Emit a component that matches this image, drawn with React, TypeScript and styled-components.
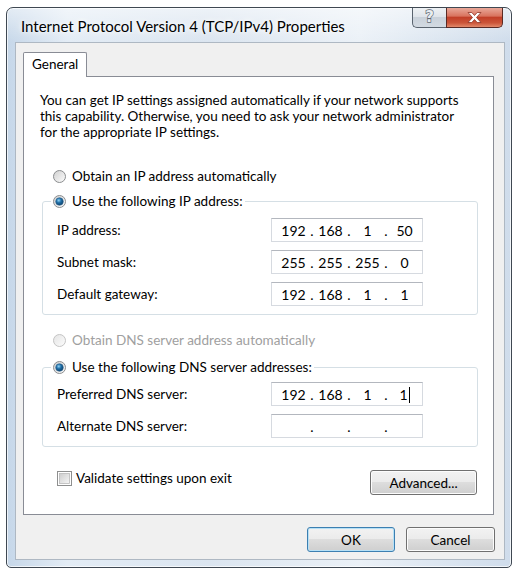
import React from 'react';
import styled, {createGlobalStyle} from 'styled-components';

const GlobalStyle = createGlobalStyle`
  html, body {
    margin: 0;
    padding: 0;
    background: #fff;
  }
  body {
    font-family: "Segoe UI", Lato, "Noto Sans", sans-serif;
    font-size: 13.5px;
    color: #000;
  }
`

const Window = styled.div`
  box-sizing: border-box;
  width: 506px;
  height: 561px;
  margin: 7px 0 0 6px;
  padding: 0 6px 7px 8px;
  display: flex;
  flex-direction: column;
  border: 1px solid #3f4852;
  border-radius: 7px 7px 5px 5px;
  box-shadow: inset 0 0 0 1px rgba(255, 255, 255, 0.7);
  background: linear-gradient(180deg, rgba(255, 255, 255, 0.5) 0px, rgba(255, 255, 255, 0) 34px),
    linear-gradient(90deg, #c6d7e9 0%, #e3ecf5 12%, #dbe5f0 40%, #ebf1f7 70%, #cfdceb 100%);
`

const TitleBar = styled.div`
  height: 34px;
  display: flex;
  justify-content: space-between;
  align-items: flex-start;
`

const Title = styled.div`
  margin-top: 9px;
  padding-left: 6px;
  font-size: 15px;
  line-height: 18px;
  text-shadow: 0 0 8px #fff, 0 0 4px #fff;
  white-space: nowrap;
`

const CaptionButtons = styled.div`
  display: flex;
  margin-right: 2px;
`

const HelpButton = styled.div`
  box-sizing: border-box;
  width: 34px;
  height: 20px;
  display: flex;
  align-items: center;
  justify-content: center;
  border: 1px solid #59636e;
  border-top: none;
  border-right: none;
  border-radius: 0 0 0 5px;
  background: linear-gradient(180deg, #eef1f4 0%, #dfe4ea 45%, #c9d1da 50%, #d3dae2 100%);
  font-family: "DejaVu Sans", sans-serif;
  font-weight: bold;
  font-size: 15px;
  line-height: 1;
  color: #e9edf1;
  -webkit-text-stroke: 1.3px #5f6873;
  paint-order: stroke fill;
`

const CloseButton = styled.div`
  box-sizing: border-box;
  width: 57px;
  height: 20px;
  display: flex;
  align-items: center;
  justify-content: center;
  border: 1px solid #5a2a24;
  border-top: none;
  border-radius: 0 0 5px 0;
  background: linear-gradient(180deg, #e9a899 0%, #d9745f 42%, #c23f28 50%, #cb5539 78%, #e3896a 100%);
`

const Client = styled.div`
  flex: 1;
  display: flex;
  flex-direction: column;
  border: 1px solid #aeb8c3;
  background: #f0f0f0;
  padding: 9px 10px 0 7px;
`

const TabStrip = styled.div`
  display: flex;
`

const Tab = styled.div`
  position: relative;
  z-index: 1;
  box-sizing: border-box;
  width: 64px;
  height: 25px;
  margin-bottom: -1px;
  padding-left: 8px;
  line-height: 23px;
  background: #fff;
  border: 1px solid #898c95;
  border-bottom: none;
  border-radius: 2px 2px 0 0;
`

const Panel = styled.div`
  box-sizing: border-box;
  height: 439px;
  display: flex;
  flex-direction: column;
  padding: 15px 15px 0 18px;
  background: #fff;
  border: 1px solid #898c95;
`

const Intro = styled.p`
  margin: 0 0 0 -2px;
  line-height: 16px;
  white-space: nowrap;
`

const RadioRow = styled.label<{ $top: number; $disabled?: boolean }>`
  display: flex;
  align-items: center;
  gap: 6px;
  height: 18px;
  margin: ${p => p.$top}px 0 0 11px;
  color: ${p => (p.$disabled ? '#a0a0a0' : '#000')};
`

const LegendRadio = styled(RadioRow)`
  margin-left: 0;
`

const Group = styled.fieldset<{ $top: number }>`
  margin: ${p => p.$top}px 0 0 0;
  padding: 0;
  min-width: 0;
  border: 1px solid #d5dfe5;
  border-radius: 3px;
`

const Legend = styled.legend`
  margin-left: 8px;
  padding: 0 2px;
`

const Rows = styled.div<{ $top: number }>`
  display: flex;
  flex-direction: column;
  gap: 8px;
  padding: ${p => p.$top}px 0 8px 14px;
`

const FieldRow = styled.div`
  display: grid;
  grid-template-columns: 214px 152px;
  align-items: center;
`

const IpBox = styled.div`
  box-sizing: border-box;
  height: 24px;
  display: flex;
  align-items: center;
  padding-left: 6px;
  border: 1px solid #d6dae0;
  border-top-color: #b3b7be;
  font-size: 14px;
  background: #fff;
`

const Octet = styled.span`
  width: 31px;
  text-align: center;
  white-space: nowrap;
`

const Dot = styled.span`
  width: 6px;
  text-align: center;
`

const Caret = styled.span`
  display: inline-block;
  width: 1px;
  height: 16px;
  margin-left: 1px;
  vertical-align: -3px;
  background: #000;
`

const BottomRow = styled.div`
  display: flex;
  justify-content: space-between;
  align-items: flex-start;
  margin-top: 23px;
  padding-right: 1px;
`

const CheckLabel = styled.label`
  display: flex;
  align-items: center;
  gap: 4px;
  height: 16px;
  margin: 0 0 0 15px;
`

const Button = styled.button<{ $width: number; $default?: boolean }>`
  box-sizing: border-box;
  width: ${p => p.$width}px;
  height: 25px;
  padding: 0;
  font-family: inherit;
  font-size: 13.5px;
  color: #000;
  border: 1px solid ${p => (p.$default ? '#3c7fb1' : '#707070')};
  border-radius: 3px;
  box-shadow: inset 0 0 0 1px ${p => (p.$default ? '#b6e0f6' : '#fcfcfc')};
  background: linear-gradient(180deg, #f2f2f2 0%, #ebebeb 49%, #dddddd 50%, #cfcfcf 100%);
`

const DialogButtons = styled.div`
  display: flex;
  justify-content: flex-end;
  gap: 11px;
  margin: 12px -1px 0 0;
`

function RadioIcon({checked, disabled}: { checked?: boolean; disabled?: boolean }) {
    const id = disabled ? 'rbg-off' : 'rbg-on';
    return (
        <svg width="13" height="13" viewBox="0 0 13 13">
            <defs>
                <linearGradient id={id} x1="0" y1="0" x2="1" y2="1">
                    <stop offset="0" stopColor={disabled ? '#e4e4e4' : '#cfcfcf'}/>
                    <stop offset="1" stopColor="#fdfdfd"/>
                </linearGradient>
                <radialGradient id="rdot" cx="0.4" cy="0.35" r="0.7">
                    <stop offset="0" stopColor="#8fd3f7"/>
                    <stop offset="0.45" stopColor="#1f6ea6"/>
                    <stop offset="1" stopColor="#0c3d66"/>
                </radialGradient>
            </defs>
            <circle cx="6.5" cy="6.5" r="6" fill={`url(#${id})`} stroke={disabled ? '#c4c4c4' : '#8b8d8f'}/>
            {checked && <circle cx="6.5" cy="6.5" r="3.8" fill="url(#rdot)" stroke="#2a5f8a" strokeWidth="0.6"/>}
        </svg>
    );
}

function CheckIcon() {
    return (
        <svg width="15" height="15" viewBox="0 0 15 15">
            <defs>
                <linearGradient id="cbg" x1="0" y1="0" x2="1" y2="1">
                    <stop offset="0" stopColor="#cdcdcd"/>
                    <stop offset="1" stopColor="#f6f6f6"/>
                </linearGradient>
            </defs>
            <rect x="0.5" y="0.5" width="14" height="14" fill="#fff" stroke="#8e8f8f"/>
            <rect x="2.5" y="2.5" width="10" height="10" fill="url(#cbg)" stroke="#b9b9b9" strokeWidth="0.8"/>
        </svg>
    );
}

function IpAddress({parts, caret}: { parts: string[]; caret?: boolean }) {
    return (
        <IpBox>
            {parts.map((part, i) => (
                <React.Fragment key={i}>
                    <Octet>{part}{caret && i === 3 && <Caret/>}</Octet>
                    {i < 3 && <Dot>.</Dot>}
                </React.Fragment>
            ))}
        </IpBox>
    );
}

const ipRows = [
    {label: 'IP address:', parts: ['192', '168', '1', '50']},
    {label: 'Subnet mask:', parts: ['255', '255', '255', '0']},
    {label: 'Default gateway:', parts: ['192', '168', '1', '1']},
];

export default function App() {
    return (
        <>
            <GlobalStyle/>
            <Window>
                <TitleBar>
                    <Title>Internet Protocol Version 4 (TCP/IPv4) Properties</Title>
                    <CaptionButtons>
                        <HelpButton>?</HelpButton>
                        <CloseButton>
                            <svg width="15" height="11" viewBox="0 0 15 11">
                                <path d="M1 0.5 H4.8 L7.5 3.5 L10.2 0.5 H14 L9.5 5.5 L14 10.5 H10.2 L7.5 7.5 L4.8 10.5 H1 L5.5 5.5 Z"
                                      fill="#fff" stroke="#8f3526" strokeWidth="0.8" strokeLinejoin="round"/>
                            </svg>
                        </CloseButton>
                    </CaptionButtons>
                </TitleBar>
                <Client>
                    <TabStrip>
                        <Tab>General</Tab>
                    </TabStrip>
                    <Panel>
                        <Intro>
                            You can get IP settings assigned automatically if your network supports<br/>
                            this capability. Otherwise, you need to ask your network administrator<br/>
                            for the appropriate IP settings.
                        </Intro>

                        <RadioRow $top={27}><RadioIcon/>Obtain an IP address automatically</RadioRow>
                        <Group $top={7}>
                            <Legend>
                                <LegendRadio $top={0}><RadioIcon checked/>Use the following IP address:</LegendRadio>
                            </Legend>
                            <Rows $top={8}>
                                {ipRows.map(row => (
                                    <FieldRow key={row.label}>
                                        <span>{row.label}</span>
                                        <IpAddress parts={row.parts}/>
                                    </FieldRow>
                                ))}
                            </Rows>
                        </Group>

                        <RadioRow $top={16} $disabled><RadioIcon disabled/>Obtain DNS server address automatically</RadioRow>
                        <Group $top={9}>
                            <Legend>
                                <LegendRadio $top={0}><RadioIcon checked/>Use the following DNS server addresses:</LegendRadio>
                            </Legend>
                            <Rows $top={6}>
                                <FieldRow>
                                    <span>Preferred DNS server:</span>
                                    <IpAddress parts={['192', '168', '1', '1']} caret/>
                                </FieldRow>
                                <FieldRow>
                                    <span>Alternate DNS server:</span>
                                    <IpAddress parts={['', '', '', '']}/>
                                </FieldRow>
                            </Rows>
                        </Group>

                        <BottomRow>
                            <CheckLabel><CheckIcon/>Validate settings upon exit</CheckLabel>
                            <Button $width={107}>Advanced...</Button>
                        </BottomRow>
                    </Panel>
                    <DialogButtons>
                        <Button $width={88} $default>OK</Button>
                        <Button $width={89}>Cancel</Button>
                    </DialogButtons>
                </Client>
            </Window>
        </>
    );
}
